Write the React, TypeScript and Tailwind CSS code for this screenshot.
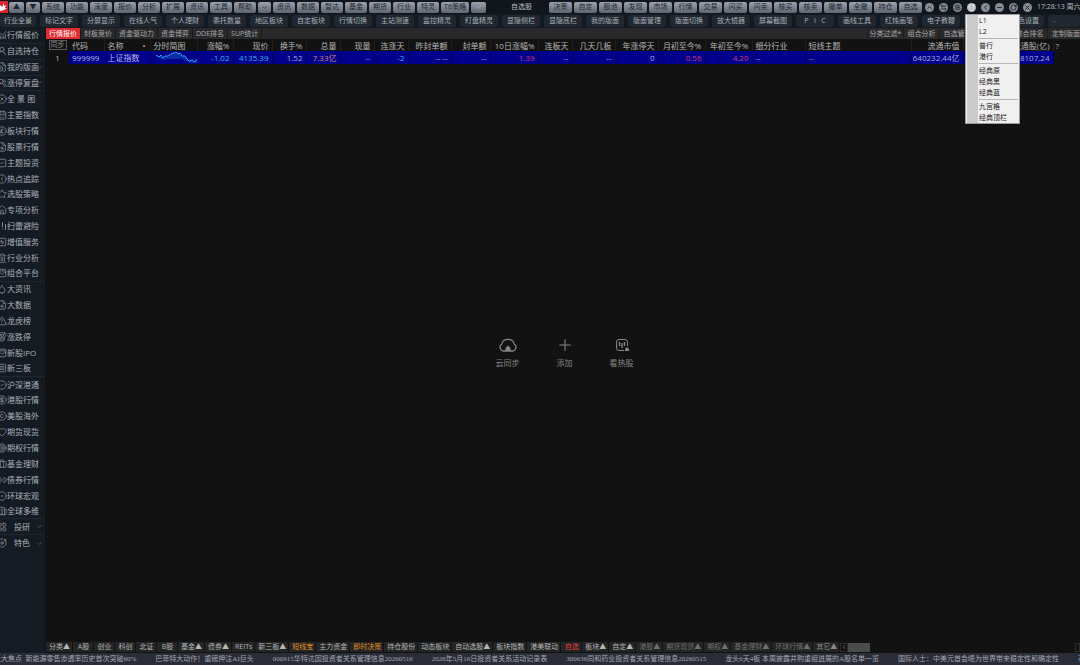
import { Fragment } from "react";
import type { ReactNode } from "react";
import clsx from "clsx";
import {
    Briefcase, Building2, CalendarDays, ChartNoAxesCombined, ChevronDown, ChevronLeft, ChevronUp,
    CircleCheck, CircleChevronLeft, CircleDollarSign, CircleDot, CirclePoundSterling, CircleX, Copyright, Droplet,
    FileClock, FileSearch, Heart, House, Landmark, LayoutGrid, Link2, Medal, Minus, Orbit,
    Plus, RotateCw, Settings, Shirt, SquareActivity, SquareCheck, SquareMenu, Star, Target, TriangleAlert,
    UserRound, UsersRound, WalletCards, ArrowLeftRight, X,
} from "lucide-react";
import type { LucideIcon } from "lucide-react";

const leftMenu = ["系统", "功能", "深度", "报价", "分析", "扩展", "资讯", "工具", "帮助"];
const midMenu = ["资讯", "数据", "智达", "基金", "期货", "行业", "特灵"];
const rightMenu = ["决策", "自定", "股池", "发现", "市场", "行情", "交易", "闪买", "闪卖", "核买", "核卖", "撤单", "全撤", "持仓", "自选"];

const windowButtons: { label: string; icon: LucideIcon }[] = [
    { label: "上", icon: ChevronUp },
    { label: "切换", icon: ArrowLeftRight },
    { label: "设置", icon: Settings },
    { label: "皮肤", icon: Shirt },
    { label: "返回", icon: ChevronLeft },
    { label: "最小化", icon: Minus },
    { label: "还原", icon: RotateCw },
    { label: "关闭", icon: X },
];

const tools = [
    "行业全景", "标记文字", "分屏显示", "在线人气", "个人理财", "委托数量", "地区板块", "自定板块",
    "行情切换", "主站测速", "监控精灵", "盯盘精灵", "显隐侧栏", "显隐底栏", "我的版面", "版面管理",
    "版面切换", "放大镜器", "屏幕截图", "P   I   C", "画线工具", "红烛画笔", "电子教鞭", "", "颜色设置",
];

const viewTabs = ["行情报价", "封板竞价", "资金驱动力", "资金博弈", "DDE排名", "SUP统计"];
const viewTools = ["分类过滤*", "组合分析", "自选管理", "", "综合排名"];

type SideItem = { label: string; icon?: LucideIcon; arrow?: boolean; line?: boolean; wide?: boolean };

const sideItems: SideItem[] = [
    { label: "行情报价", icon: ChartNoAxesCombined, line: true },
    { label: "自选持仓", icon: UserRound, line: true },
    { label: "我的版面", icon: FileClock, arrow: true, line: true },
    { label: "涨停复盘", icon: UsersRound, arrow: true, line: true },
    { label: "全 景 图", icon: CircleX },
    { label: "主要指数", icon: CalendarDays },
    { label: "板块行情", icon: CirclePoundSterling },
    { label: "股票行情", icon: FileSearch },
    { label: "主题投资", icon: SquareCheck },
    { label: "热点追踪", icon: CircleChevronLeft },
    { label: "选股策略", icon: Star },
    { label: "专项分析", icon: House },
    { label: "扫雷避险" },
    { label: "增值服务", icon: SquareActivity },
    { label: "行业分析", icon: Landmark },
    { label: "组合平台", icon: WalletCards, line: true },
    { label: "大资讯", icon: Droplet },
    { label: "大数据", icon: FileSearch },
    { label: "龙虎榜", icon: TriangleAlert },
    { label: "涨跌停", icon: Medal },
    { label: "新股IPO", icon: WalletCards },
    { label: "新三板", icon: SquareMenu, line: true },
    { label: "沪深港通", icon: CircleCheck },
    { label: "港股行情", icon: CircleDollarSign },
    { label: "美股海外", icon: Copyright },
    { label: "期货现货", icon: Heart },
    { label: "期权行情", icon: Target },
    { label: "基金理财", icon: Briefcase },
    { label: "债券行情", icon: Link2 },
    { label: "环球宏观", icon: CircleDot },
    { label: "全球多维", icon: Building2, line: true },
    { label: "投研", icon: LayoutGrid, arrow: true, line: true, wide: true },
    { label: "特色", icon: Orbit, arrow: true, wide: true },
];

type Column = { title: string; value: ReactNode; col: string; left?: boolean; tone?: string };

const columns: Column[] = [
    { title: "代码", value: "999999", col: "w-[35px]", left: true, tone: "text-[#b9b9e6]" },
    { title: "名称", value: "上证指数", col: "w-[46px]", left: true, tone: "text-[#b9b9e6]" },
    { title: "分时简图", value: <Sparkline />, col: "w-[47px]", left: true },
    { title: "涨幅%", value: "-1.02", col: "w-[36px]", tone: "text-[#35b8e8]" },
    { title: "现价", value: "4135.39", col: "w-[39px]", tone: "text-[#35b8e8]" },
    { title: "换手%", value: "1.52", col: "w-[34px]" },
    { title: "总量", value: "7.33亿", col: "w-[34px]", tone: "text-[#d98472]" },
    { title: "现量", value: "--", col: "w-[34px]" },
    { title: "连涨天", value: "-2", col: "w-[34px]", tone: "text-[#35b8e8]" },
    { title: "昨封单额", value: "-- --", col: "w-[43px]" },
    { title: "封单额", value: "--", col: "w-[39px]" },
    { title: "10日涨幅%", value: "1.39", col: "w-[48px]", tone: "text-[#d0387c]" },
    { title: "连板天", value: "--", col: "w-[34px]" },
    { title: "几天几板", value: "--", col: "w-[43px]" },
    { title: "年涨停天", value: "0", col: "w-[43px]" },
    { title: "月初至今%", value: "0.56", col: "w-[47px]", tone: "text-[#d0387c]" },
    { title: "年初至今%", value: "4.20", col: "w-[47px]", tone: "text-[#d0387c]" },
    { title: "细分行业", value: "--", col: "w-[53px]", left: true },
    { title: "短线主题", value: "--", col: "w-[106px]", left: true, tone: "text-[#b08a6a]" },
    { title: "流通市值", value: "640232.44亿", col: "w-[52px]" },
    { title: "流通股(亿)", value: "48107.24", col: "w-[90px]" },
];

const menuGroups = [["L1", "L2"], ["普行", "港行"], ["经典原", "经典黑", "经典蓝"], ["九宫格", "经典顶栏"]];

const bottomTabs: { label: string; up?: boolean; tone?: string }[] = [
    { label: "分类", up: true },
    { label: "A股" },
    { label: "创业" },
    { label: "科创" },
    { label: "北证" },
    { label: "B股" },
    { label: "基金", up: true },
    { label: "债券", up: true },
    { label: "REITs" },
    { label: "新三板", up: true },
    { label: "短线宝", tone: "text-[#e08a1c]" },
    { label: "主力资金" },
    { label: "即时决策", tone: "text-[#e08a1c]" },
    { label: "持仓股份" },
    { label: "动态板块" },
    { label: "自动选股", up: true },
    { label: "板块指数" },
    { label: "港美联动" },
    { label: "自选", tone: "text-[#e23a3a]" },
    { label: "板块", up: true },
    { label: "自定", up: true },
    { label: "港股", up: true, tone: "text-[#6f6f6f]" },
    { label: "期货现货", up: true, tone: "text-[#6f6f6f]" },
    { label: "期权", up: true, tone: "text-[#6f6f6f]" },
    { label: "基金理财", up: true, tone: "text-[#6f6f6f]" },
    { label: "环球行情", up: true, tone: "text-[#6f6f6f]" },
    { label: "其它", up: true, tone: "text-[#8a8a8a]" },
];

const news = [
    "巴菲特大动作！重磅押注AI巨头",
    "000915华特达因投资者关系管理信息20260516",
    "2026年5月16日投资者关系活动记录表",
    "300636同和药业投资者关系管理信息20260515",
    "龙头6天4板 本周披露并购重组进展的A股名单一览",
    "国际人士：中美元首会晤为世界带来稳定性和确定性",
    "石油",
];

function Sparkline() {
    const line = "0,3 3,5 5,3 7,6 9,4 12,4 15,2 18,1 20,0 22,2 24,1 26,4 29,4 31,7 33,9 36,8 39,10 41,7";
    return (
        <svg viewBox="0 0 44 11" className="ml-[2px] h-[11px] w-[44px]" aria-hidden="true">
            <polygon points={`0,3 ${line} 41,11 34,11 26,7 14,7 6,8`} fill="#1560c8" opacity="0.45" />
            <polyline points={line} fill="none" stroke="#36a3e6" strokeWidth="1" />
        </svg>
    );
}

function BarButton({ children, className }: { children: ReactNode; className?: string }) {
    return (
        <button
            className={clsx(
                "flex h-[11px] shrink-0 items-center justify-center rounded-[2px] bg-linear-to-b from-[#9aa3ae] to-[#5d6570] text-[#20262e]",
                className ?? "w-[22px]",
            )}
        >
            {children}
        </button>
    );
}

function TopBar() {
    return (
        <header className="flex h-[14px] shrink-0 items-center bg-[#11161c]">
            <svg viewBox="0 0 8 12" className="mr-px h-[12px] w-[8px] shrink-0" aria-hidden="true">
                <rect width="8" height="12" fill="#d9252b" />
                <path d="M0 4 L2 6 L4 2 L4 5 L6 4 L5 7 L7 7 Q4 10 0 10 Z" fill="#fff" />
            </svg>
            <div className="flex shrink-0 gap-[2px]">
                <BarButton className="w-[15px]">▲</BarButton>
                <BarButton className="w-[14px]">▼</BarButton>
                {leftMenu.map((name) => (
                    <BarButton key={name}>{name}</BarButton>
                ))}
                <BarButton className="w-[13px]"><ChevronDown size={7} /></BarButton>
                {midMenu.map((name) => (
                    <BarButton key={name}>{name}</BarButton>
                ))}
                <BarButton className="w-[28px]">T6策略</BarButton>
                <BarButton className="w-[15px]"><ChevronDown size={7} color="#c3cad3" /></BarButton>
            </div>
            <h1 className="w-[63px] shrink-0 pl-[8px] text-center text-[#b4bac2]">自选股</h1>
            <div className="flex shrink-0 gap-[2px]">
                {rightMenu.map((name) => (
                    <BarButton key={name} className="w-[23px]">{name}</BarButton>
                ))}
            </div>
            <div className="ml-[3px] flex shrink-0 gap-[5px]">
                {windowButtons.map(({ label, icon: Icon }) => (
                    <button
                        key={label}
                        aria-label={label}
                        className={clsx(
                            "flex size-[9px] items-center justify-center rounded-full",
                            label === "皮肤" ? "bg-[#b3b9c0] text-[#e6e9ec]" : "bg-[#868e98] text-[#1b2027]",
                        )}
                    >
                        <Icon size={7} strokeWidth={3} />
                    </button>
                ))}
            </div>
            <time className="ml-[5px] shrink-0 whitespace-nowrap text-[#b4bac2]">17:28:13 周六</time>
        </header>
    );
}

function ToolBar() {
    return (
        <nav className="flex h-[14px] shrink-0 items-center gap-[4px] overflow-hidden bg-[#141a21]">
            {tools.map((name, i) => (
                <button
                    key={i}
                    className={clsx(
                        "h-[12px] shrink-0 rounded-[3px] bg-[#20272f] whitespace-pre text-[#a7afb8]",
                        i === 0 ? "w-[36px]" : "w-[38px]",
                    )}
                >
                    {name}
                </button>
            ))}
            <button aria-label="更多" className="flex h-[12px] flex-1 items-center rounded-[3px] bg-[#20272f] pl-[3px] text-[#69717b]">
                <ChevronDown size={7} />
            </button>
        </nav>
    );
}

function SideBar() {
    return (
        <aside className="w-[46px] shrink-0 border-r border-[#0d1014] bg-[#151b22]">
            <ul className="grid h-[523px] auto-rows-fr grid-cols-1 text-[8px] text-[#a9b2bc]">
                {sideItems.map(({ label, icon: Icon, arrow, line, wide }) => (
                    <li key={label} className={clsx("flex", line && "border-b border-[#20262e]")}>
                        <button className="flex w-full items-center overflow-hidden pr-[2px] whitespace-nowrap">
                            {Icon ? (
                                <Icon size={10} strokeWidth={2} className="-ml-[3px] shrink-0 text-[#7e8791]" />
                            ) : (
                                <svg viewBox="0 0 7 10" className="h-[10px] w-[7px] shrink-0 text-[#7e8791]" fill="none" stroke="currentColor">
                                    <path d="M2.5 1 V6 M2.5 7.5 V8.5 M5.5 3 V9" />
                                </svg>
                            )}
                            <span className={clsx("min-w-0 flex-1 text-left", wide && "pl-[7px]")}>{label}</span>
                            {arrow && <ChevronDown size={7} className="shrink-0 text-[#6e7781]" />}
                        </button>
                    </li>
                ))}
            </ul>
        </aside>
    );
}

function ViewTabs() {
    return (
        <div className="flex h-[11px] shrink-0 overflow-hidden bg-[#28292b] whitespace-nowrap text-[#a8a8a8]">
            {viewTabs.map((name, i) => (
                <button
                    key={name}
                    className={clsx("border-r border-[#1d1d1e] px-[3px]", i === 0 && "bg-[#e02b30] text-white")}
                >
                    {name}
                </button>
            ))}
            <div className="ml-auto flex shrink-0">
                {viewTools.map((name, i) => (
                    <button key={i} className="w-[36px] border-l border-[#1d1d1e]">{name}</button>
                ))}
                <button className="w-[33px] border-l border-[#1d1d1e] text-right">定制版面</button>
            </div>
        </div>
    );
}

function QuoteTable() {
    return (
        <table className="w-full shrink-0 table-fixed border-collapse text-[8px] leading-[11px] whitespace-nowrap">
            <colgroup>
                <col className="w-[23px]" />
                {columns.map((c) => (
                    <col key={c.title} className={c.col} />
                ))}
                <col />
            </colgroup>
            <thead>
                <tr className="h-[12px] text-[#b5b5b5]">
                    <th className="p-0 font-normal">
                        <button className="mx-auto block h-[10px] border border-[#55585c] px-px text-[7px] leading-[8px] text-[#8f8f8f]">同步</button>
                    </th>
                    {columns.map((c) => (
                        <th
                            key={c.title}
                            className={clsx("border-r border-[#1f1f1f] py-0 font-normal", c.left ? "pr-0 pl-[3px] text-left" : "pr-[3px] pl-0 text-right")}
                        >
                            {c.title === "名称" ? (
                                <span className="flex justify-between pr-[4px]">
                                    名称<span>•</span>
                                </span>
                            ) : (
                                c.title
                            )}
                        </th>
                    ))}
                    <th className="py-0 pl-[2px] text-left font-normal">?</th>
                </tr>
            </thead>
            <tbody>
                <tr className="h-[13px] text-[#a9a9d6]">
                    <td className="p-0 text-center text-[#b0b0b0]">1</td>
                    {columns.map((c) => (
                        <td
                            key={c.title}
                            className={clsx(
                                "border-r border-[#00005c] bg-[#00008c] py-0",
                                c.left ? "pr-0 pl-[3px] text-left" : "pr-[3px] pl-0 text-right",
                                c.tone,
                            )}
                        >
                            {c.value}
                        </td>
                    ))}
                    <td className="p-0" />
                </tr>
            </tbody>
        </table>
    );
}

function EmptyActions() {
    return (
        <div className="flex flex-1 items-center justify-center pb-[2px] pl-[3px] text-[8px] text-[#858585]">
            <button className="flex w-[57px] flex-col items-center gap-[4px]">
                <svg viewBox="0 0 20 18" className="h-[18px] w-[20px]" fill="none" stroke="currentColor" strokeWidth="1.3">
                    <path d="M6 15 A3.8 3.8 0 0 1 3.8 8 A6.3 5.6 0 0 1 16.2 8 A3.8 3.8 0 0 1 14 15 Z" />
                    <path d="M10 9.5 L12.5 12 V15 H7.5 V12 Z" fill="currentColor" stroke="none" />
                </svg>
                云同步
            </button>
            <button className="flex w-[57px] flex-col items-center gap-[4px]">
                <Plus size={18} strokeWidth={1.5} />
                添加
            </button>
            <button className="flex w-[57px] flex-col items-center gap-[4px]">
                <svg viewBox="0 0 18 18" className="size-[18px]" fill="none" stroke="currentColor" strokeWidth="1">
                    <path d="M11 14.5 H6 Q3.5 14.5 3.5 12 V6 Q3.5 3.5 6 3.5 H12 Q14.5 3.5 14.5 6 V10" />
                    <path d="M6.5 6 V10 M9 7 V12 M11.5 6 V10" strokeWidth="1.4" />
                    <path d="M14 11 L16 13 V15 H12 V13 Z" fill="currentColor" stroke="none" />
                </svg>
                看热股
            </button>
        </div>
    );
}

function BottomTabs() {
    return (
        <div className="flex h-[12px] shrink-0 items-center overflow-hidden bg-[#121212] whitespace-nowrap text-[#b5b5b5]">
            {bottomTabs.map(({ label, up, tone }) => (
                <button
                    key={label}
                    className={clsx("h-[10px] min-w-[21px] shrink-0 border-r border-[#121212] bg-[#232425] pr-[2px] pl-[3px]", tone)}
                >
                    {label}
                    {up && "▲"}
                </button>
            ))}
            <button aria-label="左移" className="flex h-[9px] w-[8px] shrink-0 items-center justify-center border border-[#2c2c2c]">
                <ChevronLeft size={6} />
            </button>
            <div className="h-[9px] w-[22px] shrink-0 bg-[#4a4b4d]" />
            <button aria-label="右移" className="ml-auto h-[9px] w-[5px] shrink-0 border border-[#2c2c2c]" />
        </div>
    );
}

function Ticker() {
    return (
        <footer className="flex h-[12px] shrink-0 items-center overflow-hidden bg-[#2a2d38] font-['Liberation_Serif','Noto_Sans_CJK_SC',sans-serif] whitespace-nowrap text-[#a3a8b3]">
            <div className="-ml-[6px] flex gap-[19px]">
                <span>火大焦点&nbsp; 新能源零售渗透率历史首次突破60%</span>
                {news.map((item) => (
                    <a key={item} href="#">{item}</a>
                ))}
            </div>
        </footer>
    );
}

function SkinMenu() {
    return (
        <div role="menu" className="absolute top-[14px] right-[60px] w-[55px] border border-[#9b9b9b] bg-[#f0f0f0] text-[#222]">
            <div className="ml-px border-l-[11px] border-[#cbcbcb] pr-px pl-px">
                {menuGroups.map((group, i) => (
                    <Fragment key={i}>
                        {i > 0 && <hr className="my-px border-t border-[#b5b5b5]" />}
                        {group.map((name) => (
                            <button key={name} role="menuitem" className="block h-[11px] w-full text-left">{name}</button>
                        ))}
                    </Fragment>
                ))}
            </div>
        </div>
    );
}

export default function App() {
    return (
        <div className="relative flex h-screen flex-col overflow-hidden bg-[#121212] font-['Open_Sans','Noto_Sans_CJK_SC',sans-serif] text-[7px] leading-[10px]">
            <TopBar />
            <ToolBar />
            <div className="flex min-h-0 flex-1">
                <SideBar />
                <main className="flex min-w-0 flex-1 flex-col">
                    <ViewTabs />
                    <QuoteTable />
                    <EmptyActions />
                    <BottomTabs />
                </main>
            </div>
            <Ticker />
            <SkinMenu />
        </div>
    );
}
